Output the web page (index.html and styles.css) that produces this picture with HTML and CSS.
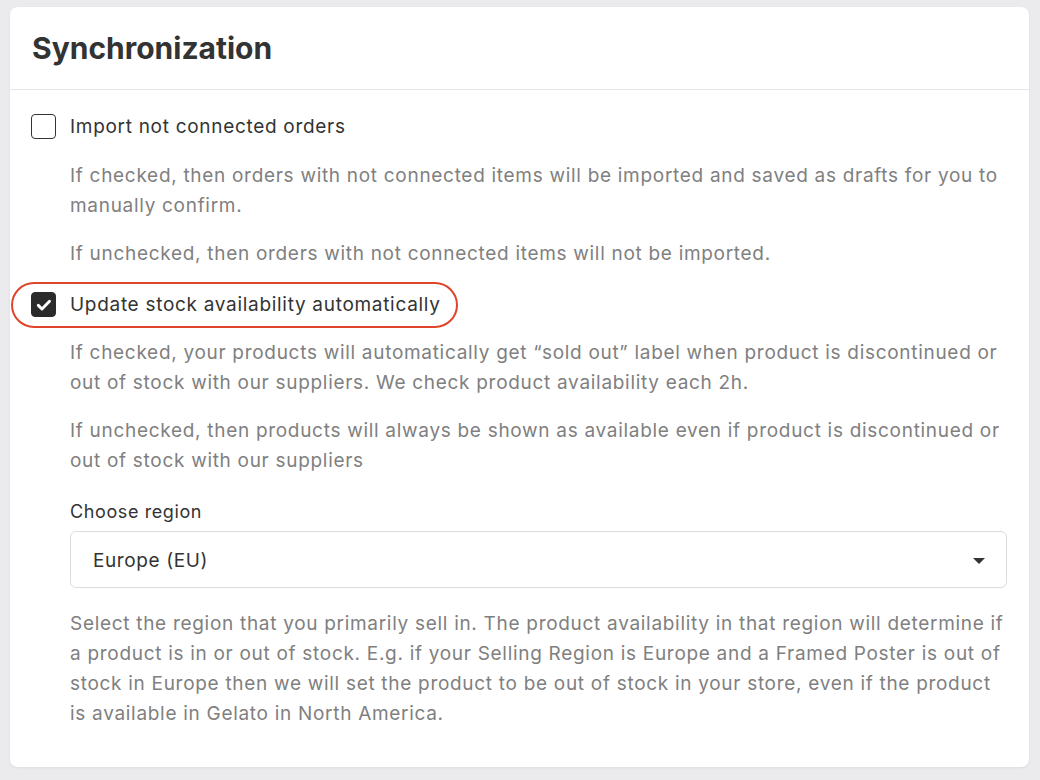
FILE: index.html
```html
<!DOCTYPE html>
<html lang="en">
<head>
<meta charset="utf-8">
<title>Synchronization</title>
<link rel="stylesheet" href="styles.css">
</head>
<body>
<section class="card">
  <header class="card-header">
    <h1 class="title">Synchronization</h1>
  </header>
  <div class="card-body">
    <div class="option">
      <label class="check-row">
        <span class="box"></span>
        <span class="check-label">Import not connected orders</span>
      </label>
      <div class="desc">
        <p>If checked, then orders with not connected items will be imported and saved as drafts for you to manually confirm.</p>
        <p>If unchecked, then orders with not connected items will not be imported.</p>
      </div>
    </div>
    <div class="option">
      <label class="check-row highlighted">
        <span class="box checked">
          <svg viewBox="0 0 24 24" width="24" height="24"><path d="M5.8 12.4l4 3.9 8.2-8.3" fill="none" stroke="#fff" stroke-width="3.2" stroke-linecap="round" stroke-linejoin="round"/></svg>
        </span>
        <span class="check-label">Update stock availability automatically</span>
      </label>
      <div class="desc">
        <p>If checked, your products will automatically get “sold out” label when product is discontinued or out of stock with our suppliers. We check product availability each 2h.</p>
        <p>If unchecked, then products will always be shown as available even if product is discontinued or out of stock with our suppliers</p>
      </div>
      <div class="field">
        <div class="field-label">Choose region</div>
        <div class="select">
          <span>Europe (EU)</span>
          <span class="caret"></span>
        </div>
        <p class="help">Select the region that you primarily sell in. The product availability in that region will determine if a product is in or out of stock. E.g. if your Selling Region is Europe and a Framed Poster is out of stock in Europe then we will set the product to be out of stock in your store, even if the product is available in Gelato in North America.</p>
      </div>
    </div>
  </div>
</section>
</body>
</html>
```
FILE: styles.css
```css
* { box-sizing: border-box; }
html, body { margin: 0; padding: 0; }
body {
  background: #ebebed;
  font-family: Inter, "Noto Sans", "Liberation Sans", sans-serif;
  color: #333;
  padding: 7px 11px 13px 10px;
  min-height: 780px;
}
.card {
  background: #fff;
  border-radius: 8px;
  box-shadow: 0 1px 3px rgba(0,0,0,0.06);
}
.card-header {
  height: 83px;
  border-bottom: 1px solid #e6e6e6;
  padding: 0 22px;
  display: flex;
  align-items: center;
}
.title {
  margin: 0;
  font-size: 30px;
  font-weight: 700;
  color: #333;
  letter-spacing: 0;
}
.card-body {
  padding: 21px 22px 38px 21px;
  letter-spacing: 0.6px;
}
.option + .option { margin-top: 21px; }
.check-row {
  position: relative;
  display: inline-flex;
  align-items: center;
  gap: 14px;
  height: 30px;
  font-size: 19px;
  letter-spacing: 0.7px;
  color: #333;
}
.box {
  width: 25px;
  height: 25px;
  border: 1.5px solid #333;
  border-radius: 4px;
  display: flex;
  align-items: center;
  justify-content: center;
}
.box.checked {
  background: #2b2b2b;
  border-color: #2b2b2b;
}
.box svg { width: 22px; height: 22px; }
.highlighted::after {
  content: "";
  position: absolute;
  top: -8px;
  bottom: -8px;
  left: -20px;
  right: -17px;
  border: 2px solid #e0442a;
  border-radius: 24px;
}
.desc, .field { padding-left: 39px; }
.desc p, .help {
  margin: 18px 0 0;
  font-size: 19px;
  line-height: 30px;
  letter-spacing: 0.7px;
  color: #808080;
}
.field { margin-top: 24px; }
.field-label {
  font-size: 18px;
  line-height: 24px;
  color: #333;
}
.select {
  margin-top: 7px;
  height: 57px;
  border: 1px solid #dcdcdc;
  border-radius: 6px;
  display: flex;
  align-items: center;
  justify-content: space-between;
  padding: 3px 21px 0 22px;
  font-size: 19px;
  color: #333;
}
.caret {
  width: 0;
  height: 0;
  border-left: 6px solid transparent;
  border-right: 6px solid transparent;
  border-top: 6px solid #333;
}
.help { margin-top: 21px; }
```
